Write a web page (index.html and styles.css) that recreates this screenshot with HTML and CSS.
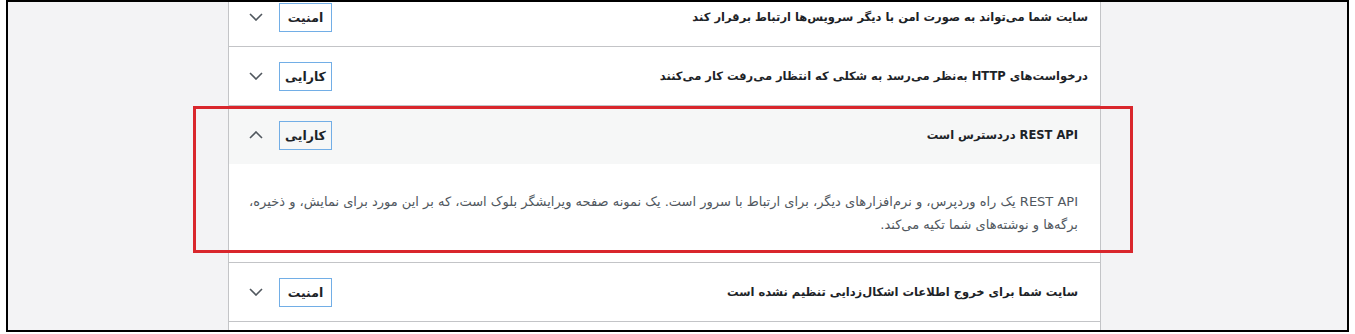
FILE: index.html
```html
<!DOCTYPE html>
<html lang="fa" dir="ltr">
<head>
    <meta charset="UTF-8">
    <meta name="viewport" content="width=device-width, initial-scale=1.0">
    <title>سلامت سایت</title>
    <link rel="stylesheet" href="styles.css">
</head>
<body>
    <div class="frame">
        <div class="accordion" dir="rtl">
            <!-- Passed tests -->
            <div class="item">
                <div class="item-head">
                    <span class="item-title">سایت شما می‌تواند به صورت امن با دیگر سرویس‌ها ارتباط برقرار کند</span>
                    <span class="item-meta">
                        <span class="badge">امنیت</span>
                        <svg class="chevron" width="14" height="8" viewBox="0 0 14 8"><path d="M1 1 L7 7 L13 1"/></svg>
                    </span>
                </div>
            </div>

            <div class="item">
                <div class="item-head">
                    <span class="item-title">درخواست‌های HTTP به‌نظر می‌رسد به شکلی که انتظار می‌رفت کار می‌کنند</span>
                    <span class="item-meta">
                        <span class="badge">کارایی</span>
                        <svg class="chevron" width="14" height="8" viewBox="0 0 14 8"><path d="M1 1 L7 7 L13 1"/></svg>
                    </span>
                </div>
            </div>

            <div class="item open">
                <div class="item-head">
                    <span class="item-title alt">REST API دردسترس است</span>
                    <span class="item-meta">
                        <span class="badge">کارایی</span>
                        <svg class="chevron" width="14" height="8" viewBox="0 0 14 8"><path d="M1 7 L7 1 L13 7"/></svg>
                    </span>
                </div>
                <div class="item-panel">
                    <p>REST API یک راه وردپرس، و نرم‌افزارهای دیگر، برای ارتباط با سرور است. یک نمونه صفحه ویرایشگر بلوک است، که بر این مورد برای نمایش، و ذخیره، برگه‌ها و نوشته‌های شما تکیه می‌کند.</p>
                </div>
            </div>

            <div class="item">
                <div class="item-head">
                    <span class="item-title alt">سایت شما برای خروج اطلاعات اشکال‌زدایی تنظیم نشده است</span>
                    <span class="item-meta">
                        <span class="badge">امنیت</span>
                        <svg class="chevron" width="14" height="8" viewBox="0 0 14 8"><path d="M1 1 L7 7 L13 1"/></svg>
                    </span>
                </div>
            </div>

            <div class="item">
                <div class="item-head"></div>
            </div>
        </div>

        <!-- highlight box -->
        <div class="highlight"></div>
    </div>
</body>
</html>
```

FILE: styles.css
```css
* {
    margin: 0;
    padding: 0;
    box-sizing: border-box;
}

body {
    font-family: Tahoma, "DejaVu Sans", sans-serif;
    background-color: #fff;
    color: #1d2327;
}

.frame {
    position: relative;
    margin-left: 6px;
    width: 1343px;
    height: 332px;
    border: 2px solid #000;
    background-color: #f3f3f5;
    overflow: hidden;
}

/* Accordion */
.accordion {
    width: 873px;
    margin-left: 220px;
    margin-top: -14px;
    background-color: #fff;
    border-left: 1px solid #c3c4c7;
    border-right: 1px solid #c3c4c7;
}

.item {
    border-bottom: 1px solid #c3c4c7;
}

.item-head {
    height: 58px;
    display: flex;
    align-items: center;
    justify-content: space-between;
    padding: 0 12px 0 20px;
}

.open .item-head {
    background-color: #f6f7f7;
}

.item-title {
    font-size: 11.5px;
    font-weight: bold;
    color: #1d2327;
}

.item-title.alt {
    margin-right: 10px;
}

.item-meta {
    display: flex;
    align-items: center;
    gap: 16px;
}

.badge {
    display: flex;
    align-items: center;
    justify-content: center;
    width: 53px;
    height: 29px;
    border: 1px solid #72aee6;
    font-size: 12.5px;
    font-weight: bold;
    color: #1d2327;
}

.chevron path {
    fill: none;
    stroke: #50575e;
    stroke-width: 1.6;
}

.item-panel {
    padding: 26px 22px 26px 20px;
}

.item-panel p {
    font-size: 13px;
    line-height: 23px;
    color: #50575e;
}

/* Red annotation box */
.highlight {
    position: absolute;
    left: 185px;
    top: 104px;
    width: 940px;
    height: 147px;
    border: 3px solid #d9262c;
}
```
